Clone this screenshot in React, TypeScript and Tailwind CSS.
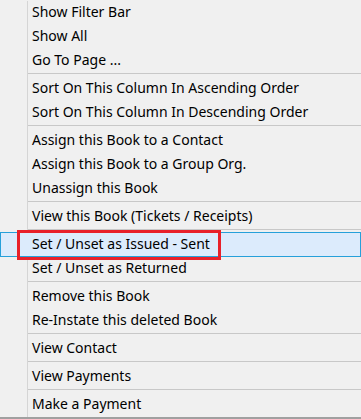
import React from "react";

type Item = { t: "row"; label: string; hl?: boolean } | { t: "sep"; short?: boolean };

const items: Item[] = [
  { t: "row", label: "Show Filter Bar" },
  { t: "row", label: "Show All" },
  { t: "row", label: "Go To Page ..." },
  { t: "sep" },
  { t: "row", label: "Sort On This Column In Ascending Order" },
  { t: "row", label: "Sort On This Column In Descending Order" },
  { t: "sep" },
  { t: "row", label: "Assign this Book to a Contact" },
  { t: "row", label: "Assign this Book to a Group Org." },
  { t: "row", label: "Unassign this Book" },
  { t: "sep" },
  { t: "row", label: "View this Book (Tickets / Receipts)" },
  { t: "sep", short: true },
  { t: "row", label: "Set / Unset as Issued - Sent", hl: true },
  { t: "row", label: "Set / Unset as Returned" },
  { t: "sep" },
  { t: "row", label: "Remove this Book" },
  { t: "row", label: "Re-Instate this deleted Book" },
  { t: "sep" },
  { t: "row", label: "View Contact" },
  { t: "sep" },
  { t: "row", label: "View Payments" },
  { t: "sep" },
  { t: "row", label: "Make a Payment" },
];

export default function App() {
  return (
    <div
      className="relative w-[361px] h-[419px] overflow-hidden bg-[#f0f0f0] text-black"
      style={{ fontFamily: '"Noto Sans", "Open Sans", sans-serif' }}
    >
      <div className="flex flex-col pt-px">
        {items.map((it, i) => {
          if (it.t === "sep") {
            return (
              <div key={i} className={`flex ${it.short ? "h-[3px]" : "h-[4px]"}`}>
                <div className="w-[28px] shrink-0 border-r border-[#d5d5d5]" />
                <div className="flex-1 border-t border-[#c8c8c8]" />
              </div>
            );
          }
          if (it.hl) {
            return (
              <div
                key={i}
                className="flex h-[25px] items-center border border-[#26a0da] bg-[#dcebfc] pb-[2px] pl-[31px] text-[14px] leading-none"
              >
                {it.label}
              </div>
            );
          }
          return (
            <div key={i} className="flex h-[24px]">
              <div className="w-[28px] shrink-0 border-r border-[#d5d5d5]" />
              <div className="flex items-center pb-[2px] pl-[4px] text-[14px] leading-none">{it.label}</div>
            </div>
          );
        })}
      </div>
      <div className="absolute left-0 top-[417px] h-[2px] w-full bg-[#a0a0a0]" />
      <div className="absolute left-[17px] top-[230px] h-[30px] w-[204px] border-[3px] border-[#e8202a]" />
    </div>
  );
}
